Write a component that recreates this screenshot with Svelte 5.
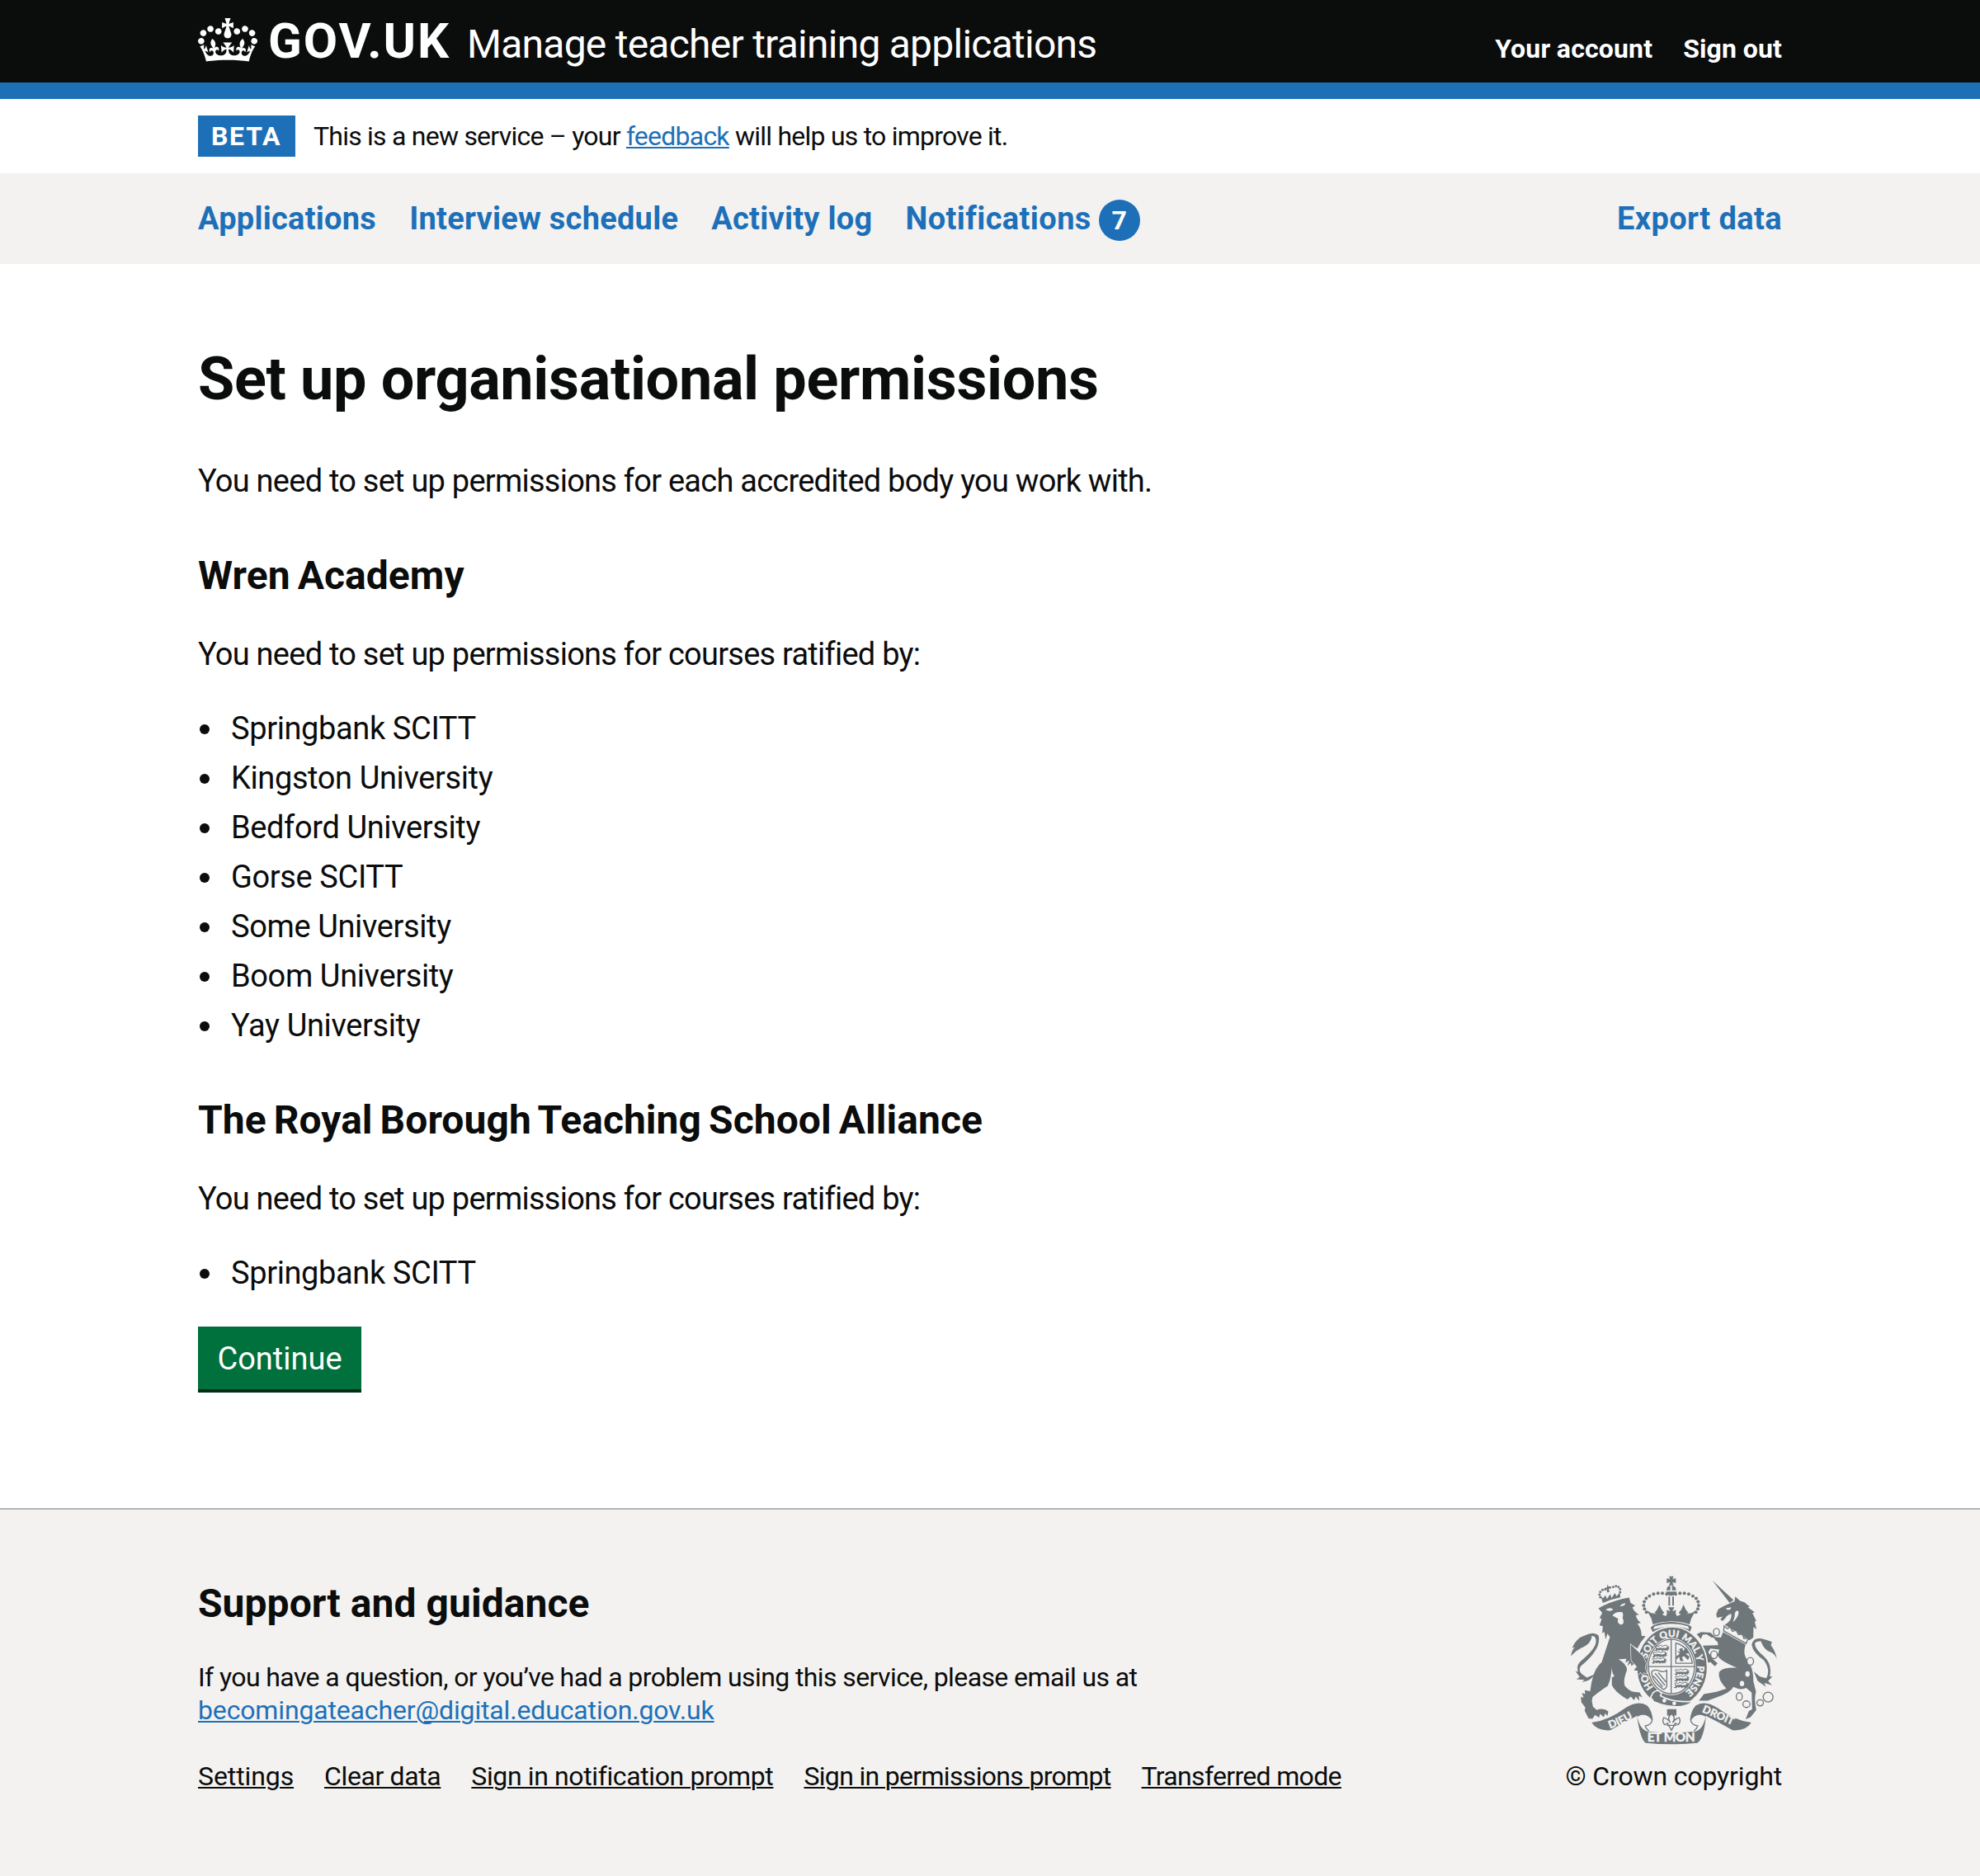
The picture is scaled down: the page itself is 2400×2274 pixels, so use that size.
<script>
  const organisations = [
    {
      name: 'Wren Academy',
      partners: ['Springbank SCITT', 'Kingston University', 'Bedford University', 'Gorse SCITT', 'Some University', 'Boom University', 'Yay University']
    },
    { name: 'The Royal Borough Teaching School Alliance', partners: ['Springbank SCITT'] }
  ];
  const footerLinks = ['Settings', 'Clear data', 'Sign in notification prompt', 'Sign in permissions prompt', 'Transferred mode'];

  // Pearls along the arches of the royal crown
  const pearls = [
    [421, 124], [405, 121], [389, 121], [373, 124], [358, 131], [346, 140], [339, 152], [337, 165], [340, 178], [347, 190],
    [453, 124], [469, 121], [485, 121], [501, 124], [516, 131], [528, 140], [535, 152], [537, 165], [534, 178], [527, 190]
  ];
  const lionPearls = [[179, 136], [176, 126], [179, 116], [187, 109], [197, 107], [251, 117], [251, 106], [245, 98], [236, 95], [226, 98]];
  const links = [[602, 262, 11, 13], [593, 345, 12, 14], [725, 369, 12, 14], [685, 497, 11, 14], [711, 525, 13, 12], [761, 520, 12, 11], [790, 499, 18, 18]];
  const passants = [[374, 316], [366, 339], [364, 362], [447, 403], [447, 427], [445, 451]];
</script>

<header class="header">
  <div class="container header-row">
    <a class="logo" href="#home">
      <svg class="crown" viewBox="0 0 132 97" aria-hidden="true">
        <path fill="currentColor" fill-rule="evenodd" d="M25 30.2c3.5 1.5 7.7-.2 9.1-3.7 1.5-3.6-.2-7.8-3.9-9.2-3.6-1.4-7.6.3-9.1 3.9-1.4 3.5.3 7.5 3.9 9zM9 39.5c3.6 1.5 7.8-.2 9.2-3.7 1.5-3.6-.2-7.8-3.9-9.1-3.6-1.5-7.6.2-9.1 3.8-1.4 3.5.3 7.5 3.8 9zM4.4 57.2c3.5 1.5 7.7-.2 9.1-3.8 1.5-3.6-.2-7.7-3.9-9.1-3.5-1.5-7.6.3-9.1 3.8-1.4 3.5.3 7.6 3.9 9.1zm38.3-21.4c3.5 1.5 7.7-.2 9.1-3.8 1.5-3.6-.2-7.7-3.9-9.1-3.6-1.5-7.6.3-9.1 3.8-1.3 3.6.4 7.7 3.9 9.1zm64.4-5.6c-3.6 1.5-7.8-.2-9.1-3.7-1.5-3.6.2-7.8 3.8-9.2 3.6-1.4 7.7.3 9.2 3.9 1.3 3.5-.4 7.5-3.9 9zm15.9 9.3c-3.6 1.5-7.7-.2-9.1-3.7-1.5-3.6.2-7.8 3.7-9.1 3.6-1.5 7.7.2 9.2 3.8 1.5 3.5-.3 7.5-3.8 9zm4.7 17.7c-3.6 1.5-7.8-.2-9.2-3.8-1.5-3.6.2-7.7 3.9-9.1 3.6-1.5 7.7.3 9.2 3.8 1.3 3.5-.4 7.6-3.9 9.1zM89.3 35.8c-3.6 1.5-7.8-.2-9.2-3.8-1.4-3.6.2-7.7 3.9-9.1 3.6-1.5 7.7.3 9.2 3.8 1.4 3.6-.3 7.7-3.9 9.1zM69.7 17.7l8.9 4.7V9.3l-8.9 2.8c-.2-.3-.5-.6-.9-.9L72.4 0H59.6l3.5 11.2c-.3.3-.6.5-.9.9l-8.8-2.8v13.1l8.8-4.7c.3.3.6.7.9.9l-5 15.4v.1c-.2.8-.4 1.6-.4 2.4 0 4.1 3.1 7.5 7 8.1h.2c.3 0 .7.1 1 .1.4 0 .7 0 1-.1h.2c4-.6 7.1-4.1 7.1-8.1 0-.8-.1-1.7-.4-2.4V34l-5.1-15.4c.4-.2.7-.6 1-.9zM66 92.8c16.9 0 32.8 1.1 47.1 3.2 4-16.9 8.9-26.7 14-33.5l-9.6-3.4c1 4.9 1.1 7.2 0 10.2-1.5-1.4-3-4.3-4.2-8.7L108.6 76c2.8-2 5-3.2 7.5-3.3-4.4 9.4-10 11.9-13.6 11.2-4.3-.8-6.3-4.6-5.6-7.9 1-4.7 5.7-5.9 8-.5 4.3-8.7-3-11.4-7.6-8.8 7.1-7.2 7.9-13.5 2.1-21.1-8 6.1-8.1 12.3-4.5 20.8-4.7-5.4-12.1-2.5-9.5 6.2 3.4-5.2 7.9-2 7.2 3.1-.6 4.3-6.4 7.8-13.5 7.2-10.3-.9-10.9-8-11.2-13.8 2.5-.5 7.1 1.8 11 7.3L80.2 60c-4.1 4.4-8 5.3-12.3 5.4 1.4-4.4 8-11.6 8-11.6H55.5s6.4 7.2 7.9 11.6c-4.2-.1-8-1-12.3-5.4l1.4 16.4c3.9-5.5 8.5-7.7 10.9-7.3-.3 5.8-.9 12.8-11.1 13.8-7.2.6-12.9-2.9-13.5-7.2-.7-5 3.8-8.3 7.1-3.1 2.7-8.7-4.6-11.6-9.4-6.2 3.7-8.5 3.6-14.7-4.6-20.8-5.8 7.6-5 13.9 2.2 21.1-4.7-2.6-11.9.1-7.7 8.8 2.3-5.5 7.1-4.2 8.1.5.7 3.3-1.3 7.1-5.7 7.9-3.5.7-9-1.8-13.5-11.2 2.5.1 4.7 1.3 7.5 3.3l-4.7-15.4c-1.2 4.4-2.7 7.2-4.3 8.7-1.1-3-.9-5.3 0-10.2l-9.5 3.4c5 6.9 9.9 16.7 14 33.5 14.8-2.1 30.8-3.2 47.7-3.2z" />
      </svg>
      <span class="logotype">GOV.UK</span>
    </a>
    <a class="service-name" href="#service">Manage teacher training applications</a>
    <nav class="account">
      <a href="#account">Your account</a>
      <a href="#signout">Sign out</a>
    </nav>
  </div>
</header>

<div class="container phase-banner">
  <strong class="tag">BETA</strong>
  <p class="phase-text">This is a new service – your <a href="#feedback">feedback</a> will help us to improve it.</p>
</div>

<div class="nav-bar">
  <nav class="container nav-row">
    <a href="#applications">Applications</a>
    <a href="#interviews">Interview schedule</a>
    <a href="#activity">Activity log</a>
    <a class="notifications" href="#notifications">Notifications<span class="badge">7</span></a>
    <a class="export" href="#export">Export data</a>
  </nav>
</div>

<main class="container main">
  <h1>Set up organisational permissions</h1>
  <p class="body">You need to set up permissions for each accredited body you work with.</p>
  {#each organisations as organisation}
    <section>
      <h2>{organisation.name}</h2>
      <p class="body">You need to set up permissions for courses ratified by:</p>
      <ul>
        {#each organisation.partners as partner}
          <li>{partner}</li>
        {/each}
      </ul>
    </section>
  {/each}
  <button class="button" type="button">Continue</button>
</main>

<footer class="footer">
  <div class="container footer-row">
    <div class="support">
      <h2 class="support-title">Support and guidance</h2>
      <p class="support-text">
        If you have a question, or you’ve had a problem using this service, please email us at<br />
        <a class="email" href="#email">becomingateacher@digital.education.gov.uk</a>
      </p>
      <div class="footer-links">
        {#each footerLinks as label}
          <a href="#footer">{label}</a>
        {/each}
      </div>
    </div>
    <a class="copyright" href="#copyright">
      <svg class="crest" viewBox="66 54 762 622" aria-hidden="true">
        <defs>
          <path id="garter" d="M439 496A93 108 0 0 1 439 280A93 108 0 0 1 439 496" />
          <path id="dieu" d="M214 614Q270 596 336 550" />
          <path id="droit" d="M548 553Q600 575 700 619" />
        </defs>

        <!-- Lion -->
        <g class="ink">
          <path d="M188 156L180 128L188 140L198 128L203 142L215 124L220 138L232 120L238 132L250 118L252 136Q220 142 188 156Z" />
          <path d="M206 88L208 96L219 97L219 103L210 104L212 116L203 118L203 106L194 108L194 102L203 100Z" />
          {#each lionPearls as [x, y]}<circle cx={x} cy={y} r="4.4" />{/each}
          <path d="M190 166Q235 145 284 137L289 156L306 166L296 173Q302 190 320 199L308 201Q312 218 327 229L314 231Q330 252 329 276L344 277L326 300L314 322L290 308L334 352L344 374L341 396L348 412L336 408L334 419L326 407L315 417L315 403L302 401L312 388L302 378L292 386L290 374L278 385L284 366L270 374L274 360L245 361Q275 378 276 400Q261 438 268 458Q284 477 300 480L322 482L332 500L319 494L321 513L308 497L302 511L290 497L278 508L262 498Q232 478 221 456L221 428L230 423Q220 410 219 382Q222 425 206 458Q170 482 151 499L148 512L152 534L166 546Q190 536 208 551L205 568L196 558L192 572L178 560L174 574L160 564L150 578L136 577L122 549L124 536L110 518L108 498L118 502L112 484L124 488L122 474L142 478Q150 400 184 372L214 280L205 268L198 289L194 262L186 266L188 240L176 238L184 214L176 212L186 192L172 176Z" />
          <path d="M72 350Q74 330 86 318L76 320Q92 284 122 275Q154 258 172 274Q186 322 108 386Q98 402 110 414L130 428L158 416Q144 441 112 444L122 436L92 434L104 426L88 404L98 408Q90 384 108 368Q164 322 163 296Q164 276 148 276Q146 302 118 316Q90 328 72 350Z" />
        </g>
        <g class="paper">
          <path d="M198 181Q214 170 226 180Q216 190 198 181ZM250 168Q260 156 271 158Q266 170 250 168Z" />
          <path d="M223 202Q234 186 260 190Q264 202 260 210Q270 232 254 236Q238 230 244 214Z" />
        </g>

        <!-- Royal crown -->
        <g class="ink">
          <path d="M429 59H446L442 70L454 66V84L442 80L446 92H429L433 80L421 84V66L433 70Z" />
          <path d="M420 110Q421 94 434 93V110ZM440 93Q454 94 455 110H440ZM418 115H457Q452 130 437 130Q422 130 418 115Z" />
          <path d="M427 133H433V166H427ZM441 133H447V166H441Z" />
          {#each pearls as [x, y]}<circle cx={x} cy={y} r="6" />{/each}
          <path d="M349 184L364 193L384 196L376 192L386 180L394 162L402 180L412 192L404 198L418 204L422 194L420 182L434 186L426 172H449L441 186L455 182L453 194L458 204L472 198L464 192L474 180L482 162L490 180L500 192L492 196L512 193L526 184L510 213L504 234Q437 212 370 234L365 213Z" />
          <path d="M372 237Q437 214 503 237L512 244L505 262Q437 236 370 262L362 246Z" />
        </g>
        <path class="paper" d="M376 242Q437 222 499 242L502 252Q437 230 372 252Z" />

        <!-- Unicorn -->
        <g class="ink">
          <path d="M587 74L664 146L650 156Z" />
          <path d="M601 197L609 179L632 166L668 150L670 133L688 149L704 154L723 170L716 172L741 190L733 193L747 222L741 224L748 252L737 244L736 282L722 292L632 236Q660 220 656 196Q642 198 634 212L624 222L616 216L624 206L604 210Z" />
          <path d="M626 262L708 308Q696 344 716 366Q738 398 736 440L746 480Q738 506 747 546L726 572L708 580L720 550L732 544L730 482L710 466Q690 476 664 462Q652 484 602 500L570 512H538L556 488L602 480L638 468Q606 436 612 408Q622 390 676 392Q612 366 606 346L612 326L580 322L572 336L590 362L606 376L596 387L580 372L568 374L552 328H542L552 312L608 310L606 298L590 286L566 270L552 272L545 288L530 270L546 262L580 264L598 280L618 282Z" />
          <path d="M822 360Q816 330 800 310L804 298Q786 290 766 286Q736 282 730 308Q736 340 774 364Q800 398 784 430L760 424L738 406L752 440L782 462L776 448L804 456L790 440L806 424L796 424Q806 380 776 352Q740 322 742 304Q746 294 764 296Q774 328 800 336Q814 342 822 360Z" />
        </g>
        <path class="band" d="M628 258L630 240L642 250L652 244L660 260L674 256L682 272L696 270L702 286L718 284L710 304Z" />
        <path class="paper" d="M636 176L656 172L652 180L642 182ZM668 206Q668 180 682 186Q686 204 662 226Z" />
        {#each links as [x, y, rx, ry]}<ellipse class="link-ring" cx={x} cy={y} {rx} {ry} />{/each}
        <g class="paper">
          <circle cx="588" cy="290" r="8" />
          <ellipse cx="715" cy="415" rx="8" ry="10" />
          <ellipse cx="695" cy="450" rx="8" ry="10" />
        </g>

        <!-- Garter and shield -->
        <ellipse class="garter" cx="440" cy="390" rx="129" ry="147" />
        <ellipse class="paper" cx="438" cy="388" rx="89" ry="104" />
        <ellipse class="rim" cx="438" cy="388" rx="84" ry="99" />
        <path class="rim" d="M437 287V488M352 388H524M454 302V376H514Q506 318 454 302Z" />
        {#each passants as [x, y]}
          <path class="beast" d="M{x} {y + 13}l8-3-2-7 8 2 10-2 10 2 12-1 3-7 8 3-4 4 4 5-7 1 3 5-8-3-4 4-3-5-8 5-3-5-9 3-2-4-6 6z" />
          <path class="beast-tail" d="M{x + 10} {y + 4}q-10-4-2-9l8 4 7-5 9 4 10-4 8 3" />
        {/each}
        <path class="ink" d="M458 330L470 336L466 324L478 320L480 332L492 318L503 338L490 342L504 352L498 364L484 350L476 354L482 368H470L466 352L456 362L454 352L468 342Z" />
        <path class="harp" d="M366 408Q372 396 394 404Q410 410 421 402V460Q412 478 402 466Q366 440 366 408ZM378 412L414 456M390 410L418 444M372 422L406 462" />
        <g class="motto ring-text">
          <text><textPath href="#garter" startOffset="12%">HO</textPath></text>
          <text><textPath href="#garter" startOffset="29.5%">SOIT</textPath></text>
          <text><textPath href="#garter" startOffset="43.5%">QUI</textPath></text>
          <text><textPath href="#garter" startOffset="55.5%">MAL</textPath></text>
          <text><textPath href="#garter" startOffset="68.5%">Y</textPath></text>
          <text><textPath href="#garter" startOffset="74.5%">PENSE</textPath></text>
        </g>
        <path class="belt" d="M372 482L388 474L402 484L398 494Q448 522 520 514Q476 548 400 526L374 516L362 500Z" />
        <circle class="paper" cx="412" cy="512" r="7" />
        <circle class="paper" cx="448" cy="522" r="7" />
        <path class="harp" d="M380 480L392 500L376 514" />
        <path class="paw" d="M290 308L334 350L345 374L342 394L349 413L337 409L334 420L326 408L315 418L315 403L301 401L312 388L301 376L292 366Z" />
        <path class="ink" d="M422 543H456V566H446L438 558L432 566H422Z" />
        <path class="lily" d="M438 560Q420 574 434 592Q426 578 410 574Q402 590 414 600L424 594L430 606L438 620L446 606L452 594L462 600Q474 590 466 574Q450 578 442 592Q456 574 438 560ZM420 602H456" />

        <!-- Motto ribbon -->
        <g class="ink">
          <path d="M147 592Q210 584 268 540Q316 508 350 530Q368 550 370 582Q346 552 312 568Q262 592 216 620Q168 624 147 592Z" />
          <path d="M729 592Q666 584 608 540Q560 508 526 530Q508 550 506 582Q530 552 564 568Q614 592 660 620Q708 624 729 592Z" />
          <path d="M312 566Q324 620 352 624Q438 634 524 624Q552 620 564 566Q556 652 532 666Q438 676 344 666Q324 652 312 566Z" />
        </g>
        <path class="curl" d="M314 568Q346 550 368 582Q366 600 342 604Q346 616 356 622M562 568Q530 550 508 582Q510 600 534 604Q530 616 520 622" />
        <g class="motto">
          <text><textPath href="#dieu">DIEU</textPath></text>
          <text><textPath href="#droit">DROIT</textPath></text>
          <text class="mon" x="350" y="662" textLength="174">ET MON</text>
        </g>
      </svg>
      <span>© Crown copyright</span>
    </a>
  </div>
</footer>

<style>
  :global(body) {
    margin: 0;
    background: #fff;
    color: #0b0c0c;
    font-family: Roboto, "Liberation Sans", sans-serif;
  }
  h1, h2, p, ul { margin: 0; padding: 0; }
  a { color: #1d70b8; text-decoration-thickness: 2px; text-underline-offset: 2px; }
  .container { width: 1920px; margin: 0 auto; }

  .header { height: 100px; background: #0b0c0c; border-bottom: 20px solid #1d70b8; }
  .header a { color: #fff; text-decoration: none; }
  .header-row { display: flex; align-items: baseline; padding-top: 19px; }
  .logo { display: flex; align-items: baseline; width: 326px; }
  .crown { width: 72px; height: 53px; margin: 3px 13px 0 0; align-self: flex-start; }
  .logotype { font-size: 60px; line-height: 61px; font-weight: 700; letter-spacing: 1.9px; }
  .service-name { font-size: 48px; line-height: 60px; letter-spacing: -0.75px; }
  .account { display: flex; gap: 37px; margin-left: auto; font-size: 32px; line-height: 40px; font-weight: 700; }
  .account a { letter-spacing: 0.15px; word-spacing: -0.5px; }

  .phase-banner { display: flex; align-items: center; height: 90px; }
  .tag { box-sizing: border-box; width: 118px; padding-left: 16px; background: #1d70b8; color: #fff; font-size: 32px; line-height: 50px; letter-spacing: 1.7px; }
  .phase-text { margin-left: 22px; font-size: 32px; line-height: 50px; letter-spacing: -0.77px; }

  .nav-bar { background: #f3f2f1; }
  .nav-row { display: flex; gap: 40px; height: 110px; }
  .nav-row a { font-size: 38px; line-height: 110px; font-weight: 700; letter-spacing: 0.25px; text-decoration: none; }
  .nav-row .notifications { display: flex; align-items: center; letter-spacing: 0.4px; }
  .badge { width: 50px; height: 50px; margin: 4px 0 0 9px; border-radius: 50%; background: #1d70b8; color: #fff; font-size: 32px; line-height: 50px; text-align: center; letter-spacing: 0; }
  .nav-row .export { margin-left: auto; letter-spacing: 0.4px; }

  .main { padding: 100px 0 140px; }
  h1 { margin-bottom: 59px; font-size: 72px; line-height: 79px; letter-spacing: -0.35px; }
  h2 { font-size: 48px; line-height: 61px; letter-spacing: 0.05px; word-spacing: -3px; }
  .body { font-size: 38px; line-height: 50px; letter-spacing: -0.76px; }
  section { padding-top: 59px; }
  section + section { padding-top: 54px; }
  section .body { margin: 40px 0 35px; }
  ul { list-style: none; }
  li { display: flex; align-items: center; font-size: 38px; line-height: 60px; letter-spacing: -0.38px; }
  li::before { content: ""; width: 12px; height: 12px; margin: 2px 26px 0 2px; border-radius: 50%; background: #0b0c0c; }
  .button { display: block; width: 198px; height: 80px; margin-top: 35px; padding: 0; border: 0; border-bottom: 4px solid #002d18; background: #00703c; color: #fff; font-family: inherit; font-size: 38px; line-height: 78px; }

  .footer { border-top: 2px solid #b1b4b6; background: #f3f2f1; }
  .footer-row { display: flex; justify-content: space-between; align-items: flex-end; box-sizing: border-box; height: 444px; padding-bottom: 101px; }
  .support-title { word-spacing: 0; }
  .support-text { margin: 39px 0 40px; font-size: 32px; line-height: 40px; letter-spacing: -0.6px; }
  .email { letter-spacing: -0.15px; }
  .footer-links { display: flex; gap: 37px; font-size: 32px; line-height: 40px; letter-spacing: -0.38px; }
  .footer-links a { color: #0b0c0c; }
  .footer-links a:first-child { letter-spacing: -0.1px; }
  .footer-links a:nth-child(n + 4) { letter-spacing: -0.68px; }
  .copyright { display: flex; flex-direction: column; align-items: center; gap: 17px; color: #0b0c0c; font-size: 32px; line-height: 40px; letter-spacing: -0.15px; text-decoration: none; }

  .crest { width: 254px; height: 207px; }
  .ink, .beast { fill: #6f777b; }
  .paper { fill: #f3f2f1; }
  .garter, .belt { fill: #6f777b; stroke: #f3f2f1; stroke-width: 5; }
  .paw { fill: #6f777b; stroke: #f3f2f1; stroke-width: 4; paint-order: stroke; }
  .band { fill: #f3f2f1; stroke: #6f777b; stroke-width: 4; }
  .rim, .link-ring, .lily, .harp, .curl, .beast-tail { fill: none; stroke: #6f777b; stroke-width: 4; }
  .link-ring { fill: #f3f2f1; }
  .beast-tail { stroke-width: 3; }
  .motto { fill: #f3f2f1; font-family: Lato, sans-serif; font-size: 39px; font-weight: 900; letter-spacing: 0; word-spacing: 0; stroke: #f3f2f1; stroke-width: 1; }
  .mon { font-size: 46px; }
  .ring-text { font-size: 35px; }
</style>
